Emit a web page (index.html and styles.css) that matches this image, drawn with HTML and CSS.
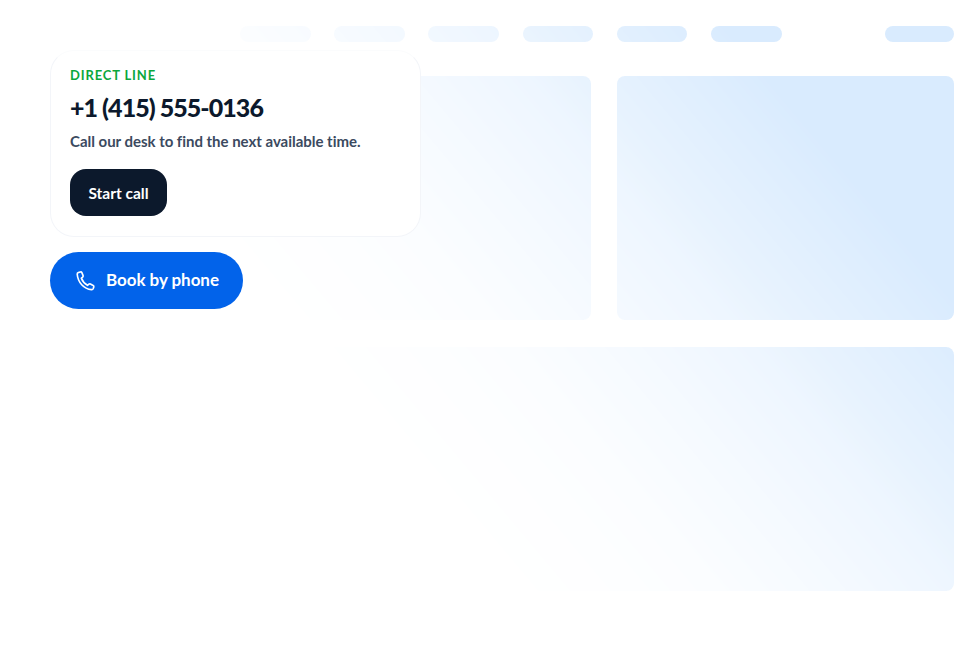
FILE: index.html
```html
<!DOCTYPE html>
<html lang="en">
<head>
<meta charset="utf-8">
<title>Book by phone</title>
<link rel="stylesheet" href="styles.css">
</head>
<body>
<div class="page">
  <div class="skeleton" aria-hidden="true">
    <div class="skeleton-nav">
      <span class="pill"></span><span class="pill"></span><span class="pill"></span>
      <span class="pill"></span><span class="pill"></span><span class="pill"></span>
      <span class="pill pill-end"></span>
    </div>
    <div class="skeleton-grid">
      <div class="tile"></div>
      <div class="tile"></div>
      <div class="tile tile-wide"></div>
    </div>
  </div>
  <div class="contact">
    <section class="card">
      <div class="eyebrow">DIRECT LINE</div>
      <div class="number">+1 (415) 555-0136</div>
      <p class="note">Call our desk to find the next available time.</p>
      <button class="start" type="button">Start call</button>
    </section>
    <button class="book" type="button">
      <svg class="phone" viewBox="0 0 24 24" width="22" height="22" fill="none" stroke="currentColor" stroke-width="1.8" stroke-linecap="round" stroke-linejoin="round">
        <path d="M5.2 2.600 7 2.100c.7-.2 1.300.2 1.600.8l1.300 3.200c.2.600.1 1.200-.4 1.600L8 8.900c1.100 3 3.600 6 6.700 7.800l1.500-1.200c.5-.4 1.100-.5 1.700-.2l3 1.500c.6.3.9 1 .7 1.600l-.6 1.800c-.3.8-1 1.300-1.900 1.200C10.600 20.600 4.300 13.500 3.500 4.600c-.1-.9.700-1.800 1.700-2z"/>
      </svg>
      <span class="book-label">Book by phone</span>
    </button>
  </div>
</div>
</body>
</html>
```

FILE: styles.css
```css
* { box-sizing: border-box; }
html, body { margin: 0; height: 100%; background: #fff; }
.page {
  position: relative;
  width: 978px;
  height: 646px;
  overflow: hidden;
  font-family: "Lato", "Liberation Sans", sans-serif;
}
.skeleton {
  padding: 26px 24px 0 50px;
  height: 100%;
  -webkit-mask-image: linear-gradient(50deg, transparent 36%, rgba(0,0,0,.04) 43%, rgba(0,0,0,.1) 50%, rgba(0,0,0,.26) 58%, rgba(0,0,0,.45) 66%, rgba(0,0,0,.62) 70%, rgba(0,0,0,.9) 79%, #000 82%);
  mask-image: linear-gradient(50deg, transparent 36%, rgba(0,0,0,.04) 43%, rgba(0,0,0,.1) 50%, rgba(0,0,0,.26) 58%, rgba(0,0,0,.45) 66%, rgba(0,0,0,.62) 70%, rgba(0,0,0,.9) 79%, #000 82%);
}
.skeleton-nav {
  display: flex;
  gap: 23.6px;
  padding-left: 190px;
  margin-bottom: 34px;
}
.pill {
  width: 70.6px;
  height: 16px;
  border-radius: 8px;
  background: #d9ebfe;
}
.pill-end { margin-left: auto; width: 69px; }
.skeleton-grid {
  display: grid;
  grid-template-columns: 1fr 337px;
  grid-template-rows: 244.3px 244.3px;
  column-gap: 26px;
  row-gap: 26.4px;
}
.tile {
  border-radius: 8px;
  background: #d9ebfe;
}
.tile-wide { grid-column: 1 / -1; }
.contact {
  position: absolute;
  left: 50px;
  top: 50px;
  width: 371px;
}
.card {
  height: 187px;
  padding: 16px 19px 0;
  background: #fff;
  border: 1px solid #f3f5f9;
  border-top-color: #fbfcfd;
  border-radius: 24px;
}
.eyebrow {
  font-size: 13px;
  line-height: 16px;
  font-weight: 700;
  letter-spacing: .85px;
  color: #0ba73c;
}
.number {
  margin-top: 7px;
  font-size: 25px;
  line-height: 34px;
  font-weight: 900;
  letter-spacing: -0.95px;
  color: #0c192c;
}
.note {
  margin: 7px 0 0;
  font-size: 15px;
  line-height: 20px;
  font-weight: 700;
  letter-spacing: -0.02px;
  color: #3b4a60;
}
.start {
  display: block;
  margin-top: 18px;
  width: 97px;
  height: 47px;
  padding: 0;
  border: 0;
  border-radius: 16px;
  background: #0c192c;
  color: #fff;
  font: 700 15.5px/20px "Lato", "Liberation Sans", sans-serif;
}
.book {
  display: flex;
  align-items: center;
  gap: 10px;
  margin-top: 15px;
  width: 193px;
  height: 57px;
  padding: 0 0 0 24px;
  border: 0;
  border-radius: 29px;
  background: #0263ea;
  color: #fff;
  font: 700 17px/22px "Lato", "Liberation Sans", sans-serif;
  letter-spacing: -0.05px;
}
.book-label { margin-bottom: 2px; }
.phone { flex: none; }
```
